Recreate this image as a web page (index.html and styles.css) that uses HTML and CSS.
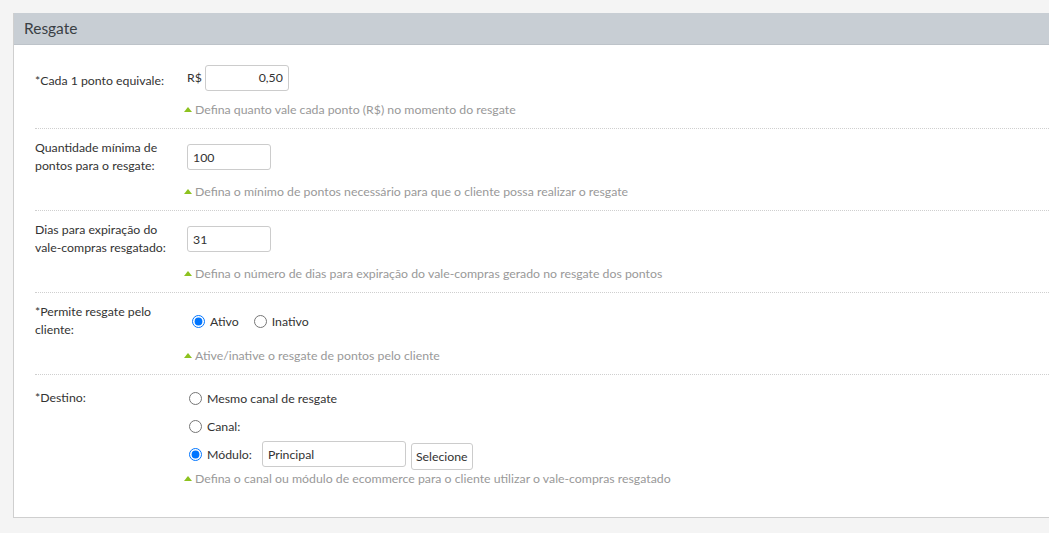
FILE: index.html
```html
<!DOCTYPE html>
<html lang="pt-BR">
<head>
    <meta charset="UTF-8">
    <meta name="viewport" content="width=device-width, initial-scale=1.0">
    <title>Resgate</title>
    <link rel="stylesheet" href="styles.css">
</head>
<body>
    <div class="panel">
        <div class="panel-header">Resgate</div>
        <form class="panel-body">
            <div class="form-row">
                <label class="row-label single" for="valor-ponto">*Cada 1 ponto equivale:</label>
                <div class="row-field">
                    <span class="prefix">R$</span>
                    <input type="text" id="valor-ponto" class="input input-money" value="0,50">
                </div>
                <div class="help"><span class="arrow"></span>Defina quanto vale cada ponto (R$) no momento do resgate</div>
            </div>
            <div class="form-row">
                <label class="row-label" for="min-pontos">Quantidade mínima de pontos para o resgate:</label>
                <div class="row-field">
                    <input type="text" id="min-pontos" class="input input-small" value="100">
                </div>
                <div class="help"><span class="arrow"></span>Defina o mínimo de pontos necessário para que o cliente possa realizar o resgate</div>
            </div>
            <div class="form-row">
                <label class="row-label" for="dias-expiracao">Dias para expiração do vale-compras resgatado:</label>
                <div class="row-field">
                    <input type="text" id="dias-expiracao" class="input input-small" value="31">
                </div>
                <div class="help"><span class="arrow"></span>Defina o número de dias para expiração do vale-compras gerado no resgate dos pontos</div>
            </div>
            <div class="form-row">
                <label class="row-label">*Permite resgate pelo cliente:</label>
                <div class="row-field">
                    <label class="radio"><input type="radio" name="permite" checked> Ativo</label>
                    <label class="radio"><input type="radio" name="permite"> Inativo</label>
                </div>
                <div class="help"><span class="arrow"></span>Ative/inative o resgate de pontos pelo cliente</div>
            </div>
            <div class="form-row last">
                <label class="row-label label-top">*Destino:</label>
                <div class="row-field stack">
                    <label class="radio"><input type="radio" name="destino"> Mesmo canal de resgate</label>
                    <label class="radio"><input type="radio" name="destino"> Canal:</label>
                    <div class="radio-line">
                        <label class="radio"><input type="radio" name="destino" checked> Módulo:</label>
                        <input type="text" class="input input-module" value="Principal">
                        <button type="button" class="btn">Selecione</button>
                    </div>
                </div>
                <div class="help help-tight"><span class="arrow"></span>Defina o canal ou módulo de ecommerce para o cliente utilizar o vale-compras resgatado</div>
            </div>
        </form>
    </div>
</body>
</html>
```

FILE: styles.css
```css
body {
    margin: 0;
    padding: 13px 0 0 13px;
    background-color: #f4f4f4;
    font-family: Lato, "Open Sans", sans-serif;
    font-size: 12.3px;
    color: #333;
}
.panel {
    background: #fff;
    border: 1px solid #cfcfcf;
    border-right: none;
    border-top: none;
    height: 505px;
    box-sizing: border-box;
}
.panel-header {
    background-color: #c8ced4;
    border-bottom: 1px solid #bdc3c9;
    height: 31px;
    line-height: 31px;
    padding-left: 10px;
    font-size: 15.5px;
    color: #3a3f44;
}
.panel-body {
    margin: 0;
    padding: 7px 0 0 21px;
}
.form-row {
    display: grid;
    grid-template-columns: 152px 1fr;
    grid-template-rows: minmax(31px, auto) auto;
    padding: 10px 0 9px;
    border-bottom: 1px dotted #cfcfcf;
}
.form-row.last {
    border-bottom: none;
}
.row-label {
    align-self: center;
    line-height: 18px;
    width: 140px;
}
.row-label.single {
    padding-top: 3px;
    margin-bottom: -3px;
}
.label-top {
    align-self: start;
    padding-top: 4px;
}
.row-field {
    display: flex;
    align-items: center;
    align-self: center;
    min-height: 26px;
}
.prefix {
    margin-right: 3px;
}
.input {
    height: 26px;
    box-sizing: border-box;
    border: 1px solid #cccccc;
    border-radius: 3px;
    font-family: inherit;
    font-size: 12.3px;
    color: #333;
    padding: 0 5px;
}
.input-money {
    width: 84px;
    text-align: right;
}
.input-small {
    width: 84px;
}
.input-module {
    width: 144px;
    margin-left: 10px;
}
.btn {
    height: 27px;
    margin-left: 5px;
    margin-top: 2px;
    padding: 0 4px;
    background: #fff;
    border: 1px solid #cccccc;
    border-radius: 3px;
    font-family: inherit;
    font-size: 12.3px;
    color: #333;
}
.help {
    grid-column: 2;
    margin-top: 8px;
    line-height: 18px;
    color: #999;
    margin-left: -3px;
}
.help-tight {
    margin-top: 0;
}
.arrow {
    display: inline-block;
    width: 0;
    height: 0;
    border-left: 4px solid transparent;
    border-right: 4px solid transparent;
    border-bottom: 5px solid #8dc21f;
    margin-right: 3px;
    vertical-align: 2px;
}
.radio {
    display: inline-flex;
    align-items: center;
    margin-right: 10px;
    color: #333;
}
.radio input {
    margin: 0 5px 0 5px;
    width: 13px;
    height: 13px;
}
.stack {
    flex-direction: column;
    align-items: flex-start;
    align-self: start;
    padding-top: 4px;
    margin-left: -3px;
}
.stack > .radio {
    height: 18px;
    margin-bottom: 10px;
}
.radio-line {
    display: flex;
    align-items: flex-start;
    margin-top: -4px;
}
.radio-line .radio {
    height: 26px;
    margin-right: 0;
}
```
